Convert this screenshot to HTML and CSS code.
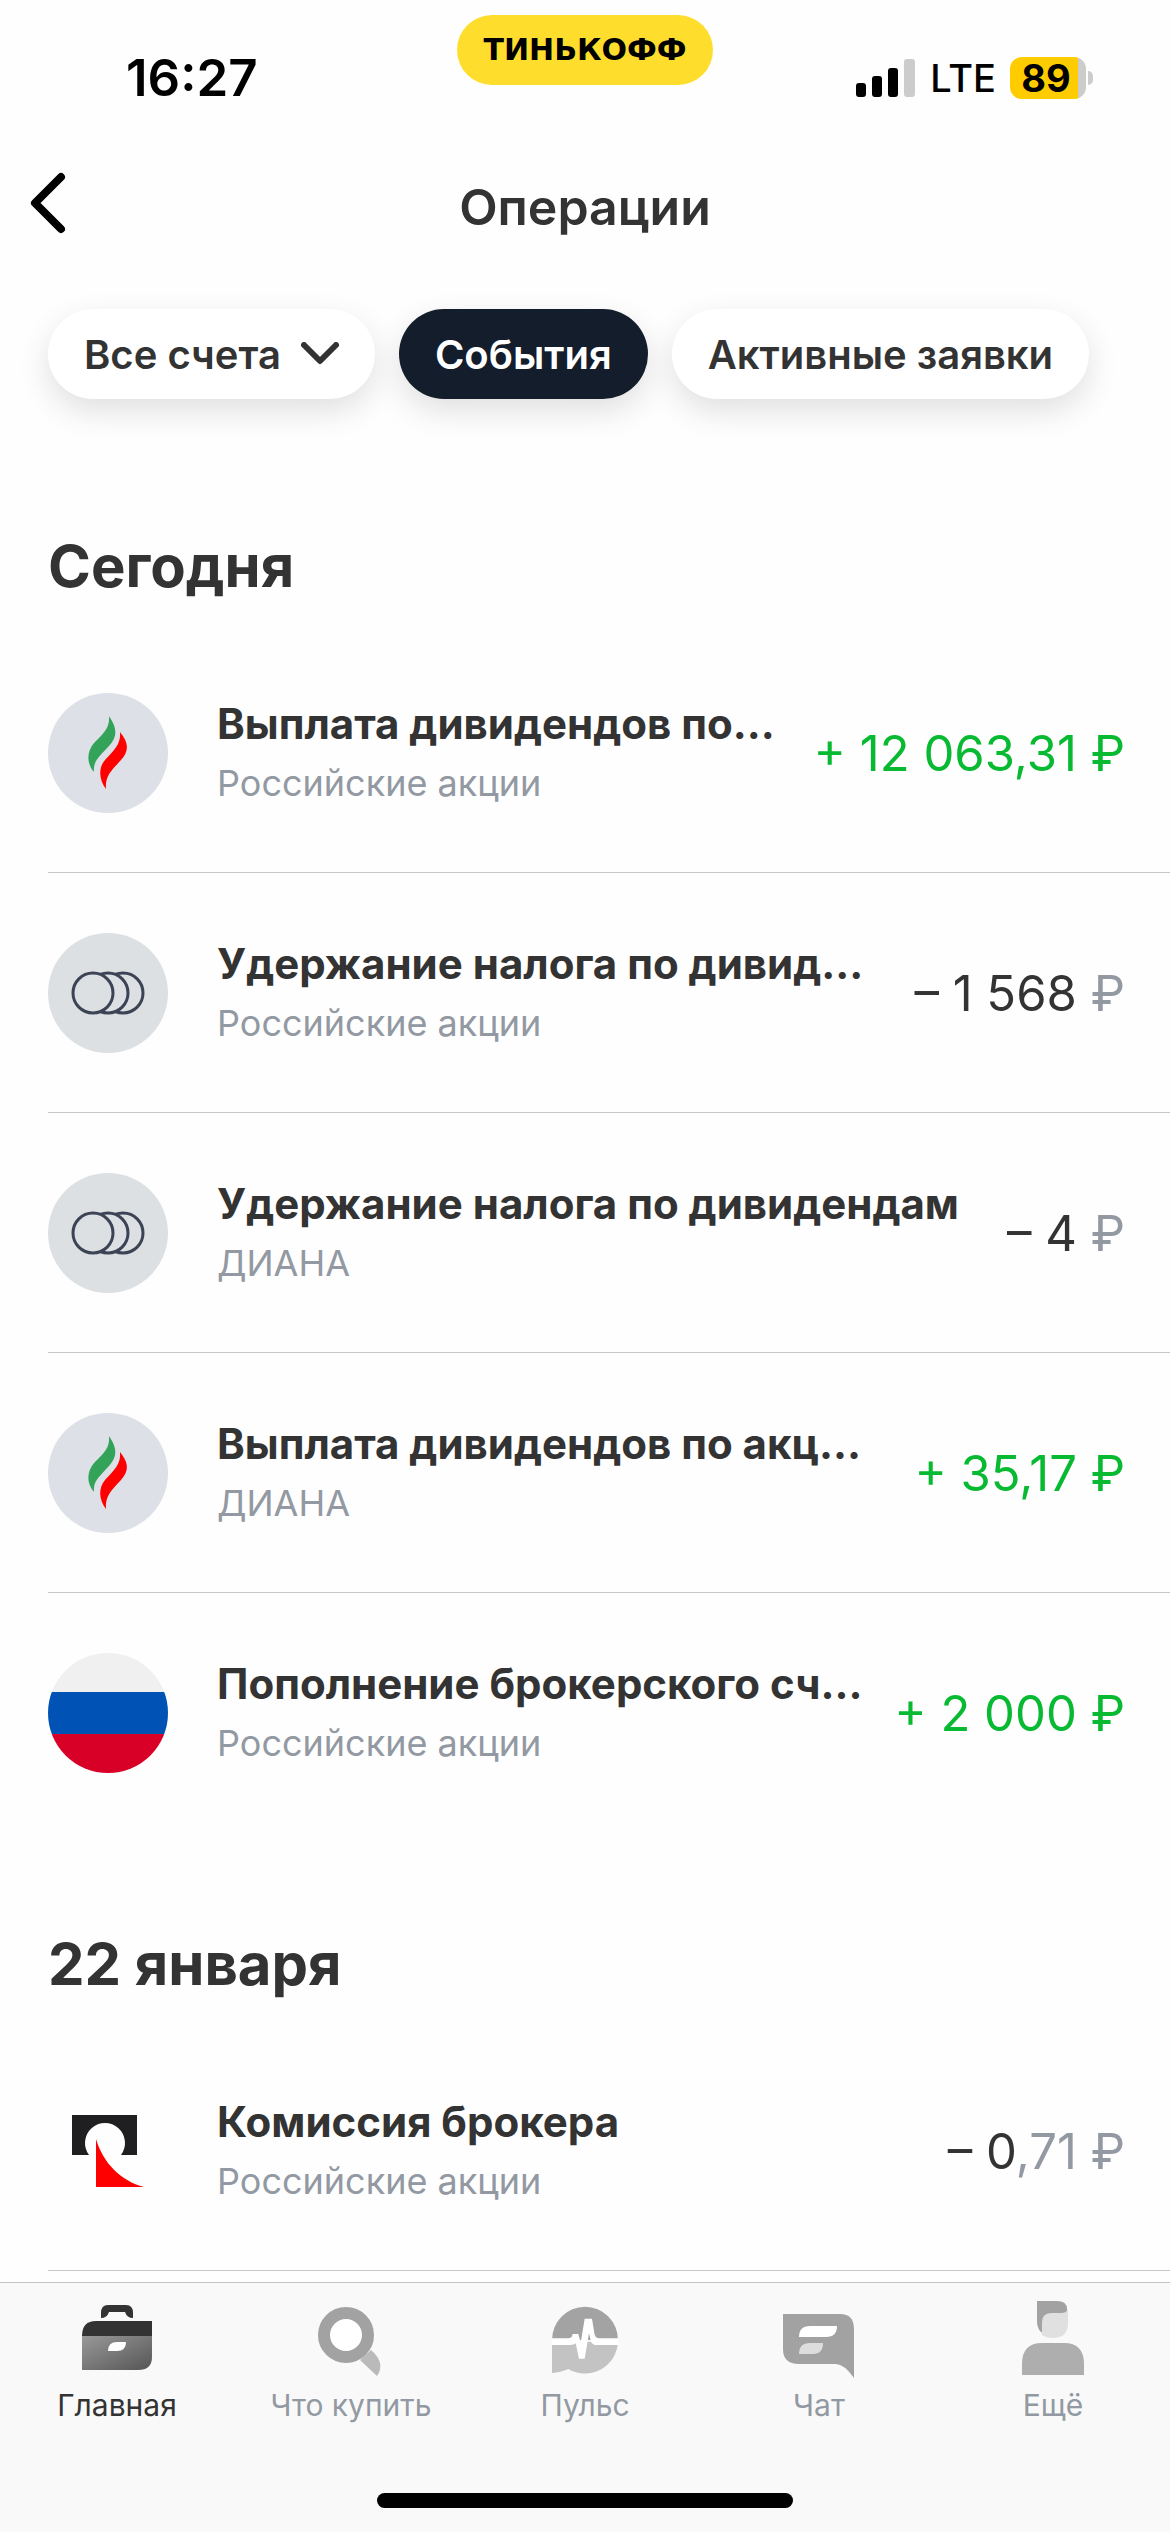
FILE: index.html
```
<!DOCTYPE html>
<html lang="ru">
<head>
    <meta charset="UTF-8">
    <meta name="viewport" content="width=device-width, initial-scale=1.0">
    <title>Операции</title>
    <link rel="stylesheet" href="styles.css">
</head>
<body>

    <!-- Status Bar -->
    <div class="status-bar">
        <span class="time">16:27</span>
        <span class="brand">ТИНЬКОФФ</span>
        <div class="status-icons">
            <svg class="signal" viewBox="0 0 60 38" aria-hidden="true">
                <rect x="0" y="24" width="10" height="14" rx="3"/>
                <rect x="16" y="17" width="10" height="21" rx="3"/>
                <rect x="32" y="9" width="10" height="29" rx="3"/>
                <rect class="off" x="48" y="0" width="11" height="38" rx="3"/>
            </svg>
            <span class="network">LTE</span>
            <span class="battery">89</span>
        </div>
    </div>

    <!-- Header -->
    <header>
        <button class="back-btn" aria-label="Назад">
            <svg viewBox="0 0 36 62"><path d="M31 5L5 31l26 26"/></svg>
        </button>
        <h1>Операции</h1>
    </header>

    <!-- Filters -->
    <div class="filters">
        <button class="chip">Все счета
            <svg class="chevron" viewBox="0 0 38 24" aria-hidden="true"><path d="M3 3l16 16L35 3"/></svg>
        </button>
        <button class="chip active">События</button>
        <button class="chip">Активные заявки</button>
    </div>

    <!-- Operations -->
    <main>
        <h2>Сегодня</h2>
        <ul class="operations">
            <li class="operation">
                <svg class="logo" viewBox="0 0 120 120" aria-hidden="true">
                    <circle cx="60" cy="60" r="60" fill="#dde0e7"/>
                    <path fill="#34a35a" d="M61 23C69 35 70 43 61 53C51 64 45 68 46 79C38 70 39 58 46 50C56 40 62 35 61 23Z"/>
                    <path fill="#ff0000" d="M72 39C80 49 82 57 73 67C63 78 57 83 58 96C51 87 50 75 57 67C67 56 73 51 72 39Z"/>
                </svg>
                <div class="info">
                    <h3>Выплата дивидендов по...</h3>
                    <p>Российские акции</p>
                </div>
                <span class="amount income">+ 12 063,31 ₽</span>
            </li>
            <li class="operation">
                <svg class="logo" viewBox="0 0 120 120" aria-hidden="true">
                    <circle cx="60" cy="60" r="60" fill="#dde0e2"/>
                    <g fill="#dde0e2" stroke="#3b4355" stroke-width="3">
                        <circle cx="75" cy="60" r="20"/>
                        <circle cx="60" cy="60" r="20"/>
                        <circle cx="45" cy="60" r="20"/>
                    </g>
                </svg>
                <div class="info">
                    <h3>Удержание налога по дивид...</h3>
                    <p>Российские акции</p>
                </div>
                <span class="amount">– 1 568 <span class="minor">₽</span></span>
            </li>
            <li class="operation">
                <svg class="logo" viewBox="0 0 120 120" aria-hidden="true">
                    <circle cx="60" cy="60" r="60" fill="#dde0e2"/>
                    <g fill="#dde0e2" stroke="#3b4355" stroke-width="3">
                        <circle cx="75" cy="60" r="20"/>
                        <circle cx="60" cy="60" r="20"/>
                        <circle cx="45" cy="60" r="20"/>
                    </g>
                </svg>
                <div class="info">
                    <h3>Удержание налога по дивидендам</h3>
                    <p>ДИАНА</p>
                </div>
                <span class="amount">– 4 <span class="minor">₽</span></span>
            </li>
            <li class="operation">
                <svg class="logo" viewBox="0 0 120 120" aria-hidden="true">
                    <circle cx="60" cy="60" r="60" fill="#dde0e7"/>
                    <path fill="#34a35a" d="M61 23C69 35 70 43 61 53C51 64 45 68 46 79C38 70 39 58 46 50C56 40 62 35 61 23Z"/>
                    <path fill="#ff0000" d="M72 39C80 49 82 57 73 67C63 78 57 83 58 96C51 87 50 75 57 67C67 56 73 51 72 39Z"/>
                </svg>
                <div class="info">
                    <h3>Выплата дивидендов по акц...</h3>
                    <p>ДИАНА</p>
                </div>
                <span class="amount income">+ 35,17 ₽</span>
            </li>
            <li class="operation">
                <div class="logo flag"></div>
                <div class="info">
                    <h3>Пополнение брокерского сч...</h3>
                    <p>Российские акции</p>
                </div>
                <span class="amount income">+ 2 000 ₽</span>
            </li>
        </ul>

        <h2>22 января</h2>
        <ul class="operations more">
            <li class="operation">
                <svg class="logo" viewBox="0 0 120 120" aria-hidden="true">
                    <path fill="#1f1f22" d="M24 24H89V64H73A20 20 0 1 0 41 64H24Z"/>
                    <path fill="#ff0000" d="M48 48C55 72 73 90 96 96H48Z"/>
                </svg>
                <div class="info">
                    <h3>Комиссия брокера</h3>
                    <p>Российские акции</p>
                </div>
                <span class="amount">– 0<span class="minor">,71 ₽</span></span>
            </li>
        </ul>
    </main>

    <!-- Tab Bar -->
    <footer>
        <nav class="tabs">
            <a class="tab active" href="#">
                <svg viewBox="0 0 90 90" aria-hidden="true">
                    <defs>
                        <linearGradient id="bag" x1="0" y1="0" x2="1" y2="1">
                            <stop offset="0" stop-color="#999"/>
                            <stop offset="1" stop-color="#555"/>
                        </linearGradient>
                    </defs>
                    <path fill="#333" d="M29 29v-5q0-8 7-8h18q7 0 7 8v5q-6 0-8-6H37q-2 6-8 6z"/>
                    <path fill="#333" d="M10 47q0-15 14-15h56v15z"/>
                    <path fill="url(#bag)" d="M10 47h70v21q0 13-14 13H10z"/>
                    <path fill="#fff" d="M36 62q0-9 9-9h9q0 9-9 9z"/>
                </svg>
                <span>Главная</span>
            </a>
            <a class="tab" href="#">
                <svg viewBox="0 0 90 90" aria-hidden="true">
                    <path fill="#bababa" d="M54 71L65 61Q80 74 71 87z"/>
                    <circle cx="40" cy="46" r="22" fill="#fff" stroke="#a2a2a2" stroke-width="12"/>
                </svg>
                <span>Что купить</span>
            </a>
            <a class="tab" href="#">
                <svg viewBox="0 -3 270 270" aria-hidden="true">
                    <path fill="#a3a3a3" d="M36 150a99 100 0 0 1 198 0z"/>
                    <path fill="#c3c3c3" d="M36 155H234A99 100 0 0 1 85 237Q62 248 36 249z"/>
                    <path fill="#fff" d="M36 145H85Q96 145 98 132H115L122 158L134 86H156L163 130Q165 145 178 145H235V165H170Q158 165 153 155L147 130L134 206H117L107 160Q102 165 90 165H36Z"/>
                </svg>
                <span>Пульс</span>
            </a>
            <a class="tab" href="#">
                <svg viewBox="0 0 90 90" aria-hidden="true">
                    <path fill="#a2a2a2" d="M9 25h57q14 0 14 15v49Q70 75 62 75H25Q9 75 9 60z"/>
                    <path fill="#fff" d="M25 48q0-11 11-11h27q0 11-11 11z"/>
                    <path fill="#ddd" d="M25 65q0-11 11-11h13q0 11-10 11z"/>
                </svg>
                <span>Чат</span>
            </a>
            <a class="tab" href="#">
                <svg viewBox="0 0 90 90" aria-hidden="true">
                    <path fill="#a2a2a2" d="M29 12h20q10 0 10 8v14H35v11q-6-5-6-12z"/>
                    <path fill="#e0e0e0" d="M34 46V33q0-9 10-9h9q6 0 7-4v14q0 15-15 15-7 0-11-3z"/>
                    <path fill="#aeaeae" d="M14 86V75q0-21 20-21h22q20 0 20 21v11z"/>
                </svg>
                <span>Ещё</span>
            </a>
        </nav>
        <div class="home-indicator"></div>
    </footer>

</body>
</html>
```
FILE: styles.css
```
* {
    box-sizing: border-box;
    margin: 0;
    padding: 0;
}

body {
    font-family: Inter, 'Liberation Sans', sans-serif;
    background-color: #fefefe;
    color: #333;
    min-height: 100vh;
    display: flex;
    flex-direction: column;
}

button {
    font: inherit;
    color: inherit;
    border: none;
    background: none;
    cursor: pointer;
}

/* Status Bar */
.status-bar {
    display: grid;
    grid-template-columns: 1fr auto 1fr;
    padding: 15px 84px 0;
    height: 140px;
    color: #000;
}

.time {
    padding-left: 42px;
    font-size: 51px;
    font-weight: 600;
    line-height: 126px;
}

.brand {
    width: 256px;
    height: 70px;
    border-radius: 35px;
    background-color: #ffdd2d;
    font-family: 'DejaVu Sans', sans-serif;
    font-size: 30px;
    font-weight: bold;
    line-height: 70px;
    text-align: center;
}

.status-icons {
    display: flex;
    justify-content: flex-end;
    align-items: center;
    height: 126px;
}

.signal {
    width: 60px;
    height: 38px;
    margin-right: 14px;
}

.signal .off {
    fill: #ccc;
}

.network {
    font-size: 38px;
    font-weight: 500;
    margin-right: 14px;
}

.battery {
    position: relative;
    width: 76px;
    height: 42px;
    border-radius: 12px;
    background: linear-gradient(to right, #ffcc00 68px, #ccc 68px);
    font-size: 38px;
    font-weight: 700;
    line-height: 42px;
    text-align: center;
    padding-right: 4px;
}

.battery::after {
    content: "";
    position: absolute;
    right: -7px;
    top: 14px;
    width: 5px;
    height: 14px;
    border-radius: 0 7px 7px 0;
    background-color: #ccc;
}

/* Header */
header {
    display: grid;
    grid-template-columns: 1fr auto 1fr;
    align-items: center;
    height: 134px;
    padding: 0 30px;
}

.back-btn {
    width: 36px;
    height: 62px;
    margin-bottom: 8px;
}

.back-btn svg {
    display: block;
    fill: none;
    stroke: #000;
    stroke-width: 8;
    stroke-linecap: round;
    stroke-linejoin: round;
}

h1 {
    font-size: 50px;
    font-weight: 600;
}

/* Filters */
.filters {
    display: flex;
    gap: 24px;
    padding: 35px 48px 36px;
}

.chip {
    display: flex;
    align-items: center;
    gap: 20px;
    height: 90px;
    padding: 0 36px;
    border-radius: 45px;
    background-color: #fff;
    box-shadow: 0 12px 32px rgba(0, 0, 0, 0.12);
    font-size: 40px;
    font-weight: 600;
    white-space: nowrap;
}

.chip.active {
    background-color: #141d2b;
    color: #fff;
}

.chevron {
    width: 38px;
    height: 24px;
    fill: none;
    stroke: #333;
    stroke-width: 6;
    stroke-linecap: round;
    stroke-linejoin: round;
}

/* Operations */
h2 {
    font-size: 58px;
    font-weight: 700;
    line-height: 70px;
    padding: 96px 48px 32px;
}

.operations {
    list-style: none;
    padding-left: 48px;
}

.operation {
    display: flex;
    align-items: center;
    height: 240px;
    padding-right: 45px;
    border-bottom: 1px solid #c8c8cc;
}

.operation:last-child {
    border-bottom-color: transparent;
}

.more .operation:last-child {
    border-bottom-color: #c8c8cc;
}

.logo {
    width: 120px;
    height: 120px;
    flex-shrink: 0;
    margin-right: 49px;
}

.flag {
    border-radius: 50%;
    background: linear-gradient(#f0f0f0 39px, #0052b4 39px, #0052b4 81px, #d80027 81px);
}

.info {
    flex: 1;
    min-width: 0;
    padding-top: 5px;
}

.info h3 {
    font-size: 42px;
    font-weight: 700;
    line-height: 56px;
    white-space: nowrap;
}

.info p {
    font-size: 36px;
    line-height: 62px;
    color: #9299a2;
}

.amount {
    font-size: 49px;
    line-height: 60px;
    padding-top: 2px;
    white-space: nowrap;
}

.income {
    color: #08b932;
}

.minor {
    color: #9299a2;
}

/* Tab Bar */
footer {
    margin-top: auto;
    height: 250px;
    border-top: 1px solid #c4c4c6;
    background-color: #f9f9f9;
}

.tabs {
    display: grid;
    grid-template-columns: repeat(5, 1fr);
    padding-top: 6px;
}

.tab {
    display: flex;
    flex-direction: column;
    align-items: center;
    color: #9299a2;
    font-size: 30px;
    line-height: 52px;
    text-decoration: none;
}

.tab svg {
    width: 90px;
    height: 90px;
}

.tab.active {
    color: #333;
}

.home-indicator {
    width: 416px;
    height: 15px;
    margin: 62px auto 0;
    border-radius: 8px;
    background-color: #000;
}
```
